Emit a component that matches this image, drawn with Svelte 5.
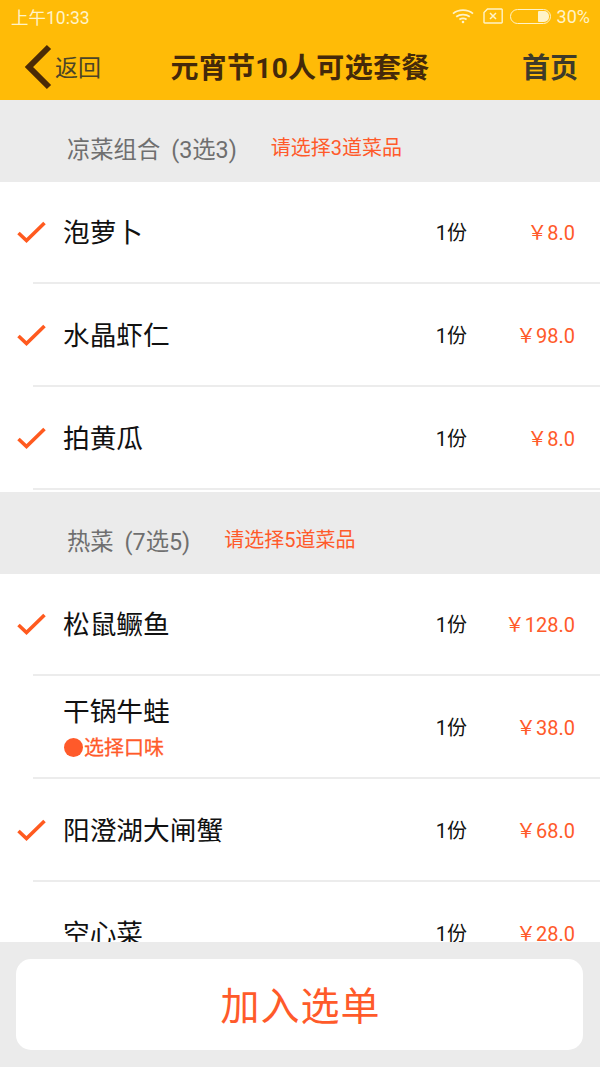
<script>
  const groups = [
    {
      name: '凉菜组合',
      count: '(3选3)',
      hint: '请选择3道菜品',
      dishes: [
        { name: '泡萝卜', price: '8.0', checked: true },
        { name: '水晶虾仁', price: '98.0', checked: true },
        { name: '拍黄瓜', price: '8.0', checked: true }
      ]
    },
    {
      name: '热菜',
      count: '(7选5)',
      hint: '请选择5道菜品',
      dishes: [
        { name: '松鼠鳜鱼', price: '128.0', checked: true },
        { name: '干锅牛蛙', price: '38.0', checked: false, flavour: true },
        { name: '阳澄湖大闸蟹', price: '68.0', checked: true },
        { name: '空心菜', price: '28.0', checked: false }
      ]
    }
  ];
</script>

<div class="page">
  <header class="top">
    <div class="status">
      <span class="clock">上午10:33</span>
      <div class="status-right">
        <svg class="wifi" width="22" height="16" viewBox="0 0 22 16" fill="none" stroke="#fff3c8" stroke-width="1.8">
          <path d="M1 5.6C6.6 1 15.4 1 21 5.6" />
          <path d="M4.2 8.8c3.9-3 9.7-3 13.6 0" />
          <path d="M7.4 11.6c2.2-1.4 5-1.4 7.2 0" />
          <circle cx="11" cy="14" r="1.3" fill="#fff3c8" stroke="none" />
        </svg>
        <svg class="sim" width="20" height="16" viewBox="0 0 20 16" fill="none" stroke="#fff3c8">
          <path d="M4.5 1H18.5a.7.7 0 0 1 .7.7V14.3a.7.7 0 0 1-.7.7H1.7a.7.7 0 0 1-.7-.7V4.5Z" stroke-width="1.4" />
          <path d="M7 5l6 6M13 5l-6 6" stroke-width="1.5" />
        </svg>
        <div class="battery"><div class="level"></div></div>
        <span class="pct">30%</span>
      </div>
    </div>
    <nav class="bar">
      <div class="back">
        <svg width="30" height="46" viewBox="0 0 30 46" fill="none">
          <path d="M27 3 7 23l20 20" stroke="#4a2a06" stroke-width="6" />
        </svg>
        <span>返回</span>
      </div>
      <h1>元宵节10人可选套餐</h1>
      <span class="home">首页</span>
    </nav>
  </header>

  <main class="list">
    {#each groups as group}
      <section class="group-head">
        <span class="group-name">{group.name}</span>
        <span class="group-count">{group.count}</span>
        <span class="group-hint">{group.hint}</span>
      </section>
      {#each group.dishes as dish}
        <div class="row">
          <div class="check">
            {#if dish.checked}
              <svg width="30" height="24" viewBox="0 0 30 24" fill="none">
                <path d="M2.500 12 10.500 19.500 28.500 2" stroke="#ff5a1f" stroke-width="3.600" />
              </svg>
            {/if}
          </div>
          <div class="row-body">
            <div class="dish">
              <div class="dish-name">{dish.name}</div>
              {#if dish.flavour}
                <div class="flavour"><i></i>选择口味</div>
              {/if}
            </div>
            <span class="qty">1份</span>
            <span class="price">￥{dish.price}</span>
          </div>
        </div>
      {/each}
    {/each}
  </main>

  <footer class="foot">
    <button type="button">加入选单</button>
  </footer>
</div>

<style>
  :global(body) {
    margin: 0;
    background: #fff;
  }
  .page {
    position: relative;
    width: 600px;
    height: 1067px;
    overflow: hidden;
    font-family: Roboto, "Noto Sans CJK SC", sans-serif;
    display: flex;
    flex-direction: column;
  }
  .top {
    height: 100px;
    flex: none;
    background: #ffbb07;
  }
  .status {
    box-sizing: border-box;
    height: 34px;
    display: flex;
    align-items: center;
    justify-content: space-between;
    padding: 0 10px 2px 11px;
    color: #fff3c8;
    font-size: 17.500px;
  }
  .status-right {
    display: flex;
    align-items: center;
  }
  .wifi {
    margin-right: 9px;
  }
  .sim {
    margin-right: 7px;
  }
  .battery {
    box-sizing: border-box;
    width: 41px;
    height: 15px;
    border: 1.500px solid #fff3c8;
    border-radius: 8px;
    display: flex;
    justify-content: flex-end;
    padding: 1px;
  }
  .level {
    width: 11px;
    background: #fff3c8;
    border-radius: 1px 5px 5px 1px;
  }
  .pct {
    margin-left: 6px;
    font-size: 18px;
  }
  .bar {
    height: 66px;
    display: grid;
    grid-template-columns: 1fr auto 1fr;
    align-items: center;
    padding: 0 22px;
  }
  .back {
    display: flex;
    align-items: center;
    color: #4b4427;
    font-size: 23px;
  }
  .back svg {
    margin-right: 3px;
  }
  .back span {
    padding-bottom: 2px;
  }
  h1 {
    margin: 0;
    padding-top: 3px;
    font-size: 28px;
    font-weight: 700;
    color: #44290a;
    line-height: 1;
    letter-spacing: 0.300px;
  }
  .home {
    justify-self: end;
    padding-bottom: 2px;
    font-size: 28px;
    font-weight: 700;
    color: #3d3a2a;
  }
  .list {
    flex: 1;
    min-height: 0;
    overflow: hidden;
  }
  .group-head {
    height: 82px;
    background: #ebebeb;
    display: flex;
    align-items: center;
    padding: 14px 0 0 67px;
    box-sizing: border-box;
    font-size: 23.300px;
    color: #6f6f6f;
  }
  .group-count {
    margin-left: 11px;
  }
  .group-hint {
    margin-left: 34px;
    font-size: 20px;
    color: #ff5a2a;
    position: relative;
    top: -2px;
  }
  .row {
    height: 103px;
    display: flex;
  }
  .group-head + .row {
    height: 102px;
  }
  .row + .group-head {
    margin-top: 2px;
  }
  .check {
    width: 33px;
    flex: none;
    display: flex;
    align-items: center;
    padding-left: 16px;
    box-sizing: border-box;
  }
  .check svg {
    flex: none;
  }
  .row-body {
    flex: 1;
    display: flex;
    align-items: center;
    border-bottom: 2px solid #ececec;
    padding: 0 25px 1px 31px;
    box-sizing: border-box;
  }
  .dish {
    flex: 1;
    padding-top: 3px;
  }
  .dish-name {
    font-size: 26.700px;
    line-height: 38px;
    color: #111;
    margin-left: -1px;
  }
  .flavour {
    display: flex;
    align-items: center;
    margin-top: 2px;
    font-size: 20px;
    line-height: 30px;
    color: #ff5a2a;
    -webkit-text-stroke: 0.300px #ff5a2a;
  }
  .flavour i {
    width: 19px;
    height: 19px;
    border-radius: 50%;
    background: #ff5a2a;
    margin-right: 1px;
  }
  .qty {
    font-size: 20px;
    color: #111;
  }
  .price {
    width: 108px;
    text-align: right;
    font-size: 20px;
    color: #ff5a2a;
  }
  .foot {
    flex: none;
    height: 125px;
    background: #ebebeb;
    box-sizing: border-box;
    padding: 17px 17px 17px 16px;
  }
  button {
    width: 100%;
    height: 91px;
    border: 0;
    border-radius: 15px;
    background: #fff;
    color: #ff5a2a;
    font-family: inherit;
    font-size: 39px;
    letter-spacing: 1px;
    padding: 0 0 4px 2px;
  }
</style>
